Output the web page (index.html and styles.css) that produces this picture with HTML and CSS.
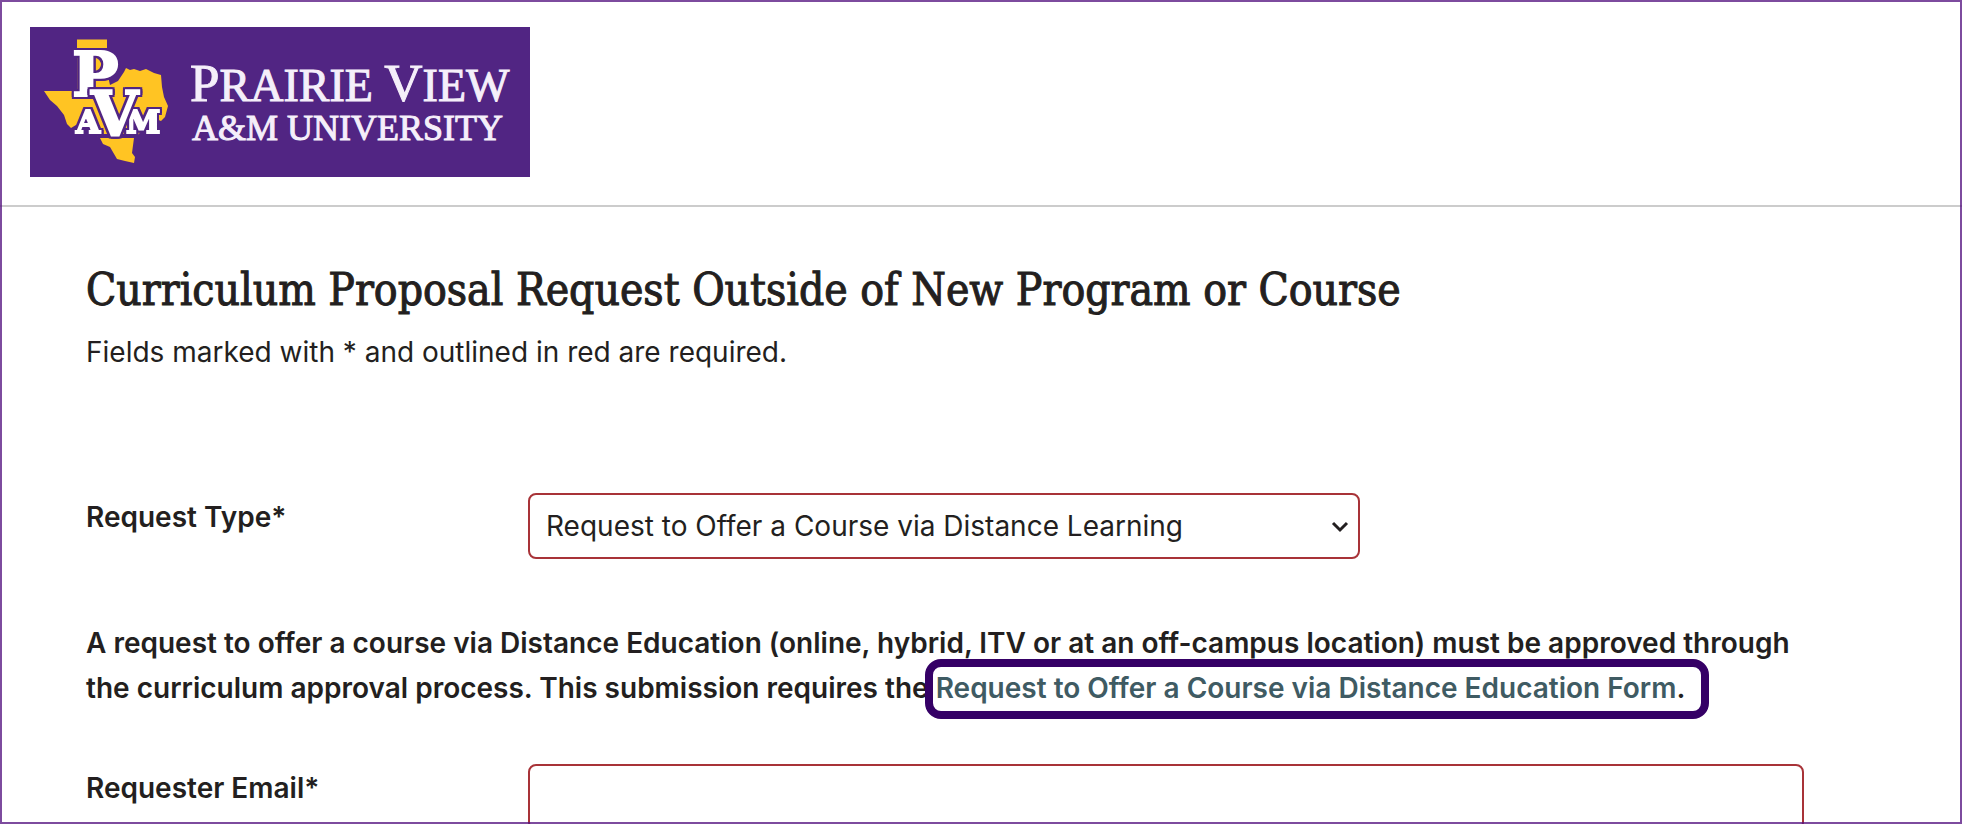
FILE: index.html
```
<!DOCTYPE html>
<html lang="en">
<head>
    <meta charset="UTF-8">
    <meta name="viewport" content="width=device-width, initial-scale=1.0">
    <title>Curriculum Proposal Request</title>
    <link rel="stylesheet" href="styles.css">
</head>
<body>
    <header class="site-header">
        <svg class="logo" viewBox="0 0 500 150" role="img" aria-label="Prairie View A&amp;M University">
            <rect class="logo-bg" width="500" height="150"/>
            <!-- Texas -->
            <path class="logo-state" d="M47 12.500H77V45L80 58L88 54L94 45L96 41L100 43L104 42L110 44L116 42L124 46L131 48L132 60L134 70L138 79L135 90L131 94L126 92L104 111L102 126L105 130L104 136L95 134L87 132L80 120L73 117L70 111L52 96L46 98L41 101L37 97L34 88L27 79L20 73L14 64H47Z"/>
            <rect class="logo-bg" x="45" y="21" width="34" height="5"/>
            <rect class="logo-bg" x="68" y="107" width="40" height="4"/>
            <g class="logo-mark">
                <text x="42" y="69" font-size="62">P</text>
                <text x="46" y="106" font-size="31">A</text>
                <text x="96" y="106" font-size="31">M</text>
                <text x="61" y="108" font-size="61">V</text>
            </g>
            <g class="logo-name">
                <text x="160" y="74" font-size="46"><tspan font-size="53">P</tspan>RAIRIE <tspan font-size="53">V</tspan>IEW</text>
                <text x="162" y="113" font-size="36">A&amp;M UNIVERSITY</text>
            </g>
        </svg>
    </header>

    <main class="content">
        <h1>Curriculum Proposal Request Outside of New Program or Course</h1>
        <p class="hint">Fields marked with * and outlined in red are required.</p>

        <form id="proposal-form">
            <div class="form-row">
                <label for="request-type" class="form-label">Request Type*</label>
                <div class="select-wrap">
                    <select id="request-type" name="request-type" class="input-field" required>
                        <option>Request to Offer a Course via Distance Learning</option>
                    </select>
                    <svg class="chevron" viewBox="0 0 16 10" aria-hidden="true">
                        <path d="M1 1L8 8L15 1"/>
                    </svg>
                </div>
            </div>

            <p class="notice">A request to offer a course via Distance Education (online, hybrid, ITV or at an off-campus location) must be approved through the curriculum approval process. This submission requires the <span class="highlight"><a href="#">Request to Offer a Course via Distance Education Form</a>.</span></p>

            <div class="form-row">
                <label for="requester-email" class="form-label">Requester Email*</label>
                <input type="email" id="requester-email" name="requester-email" class="input-field" required>
            </div>
        </form>
    </main>
</body>
</html>
```
FILE: styles.css
```
* {
    box-sizing: border-box;
}
body {
    margin: 0;
    height: 100vh;
    overflow: hidden;
    background-color: #fff;
    color: #231f20;
    font-family: Inter, "Liberation Sans", sans-serif;
    font-size: 28px;
    line-height: 45px;
}
/* Frame around the whole window */
body::after {
    content: "";
    position: fixed;
    inset: 0;
    border: 2px solid rgba(82, 15, 125, 0.75);
    pointer-events: none;
}
.site-header {
    padding: 27px 30px 28px;
    border-bottom: 2px solid #ccc;
}
.logo {
    display: block;
    width: 500px;
    height: 150px;
}
.logo-bg {
    fill: #512583;
}
.logo-state {
    fill: #ffc423;
}
.logo-mark text {
    fill: #fff;
    stroke: #fff;
    stroke-width: 2px;
    font-family: "DejaVu Serif", serif;
    font-weight: bold;
    /* purple outline round each letter */
    filter: drop-shadow(2px 0 0 #512583) drop-shadow(-2px 0 0 #512583) drop-shadow(0 2px 0 #512583) drop-shadow(0 -2px 0 #512583);
}
.logo-name {
    fill: #f5effa;
    stroke: #f5effa;
    stroke-width: 1px;
    font-family: "Liberation Serif", serif;
}
.content {
    padding: 51px 86px 0;
}
h1 {
    margin: 0;
    font-family: "Roboto Slab", "DejaVu Serif Condensed", "DejaVu Serif", serif;
    font-size: 44px;
    font-weight: 400;
    line-height: 64px;
    -webkit-text-stroke: 1px #231f20;
}
.hint {
    margin: 8px 0 118px;
}
.form-row {
    display: grid;
    grid-template-columns: 442px minmax(0, 1276px);
    align-items: start;
}
.form-label {
    font-weight: 600;
    padding-top: 2px;
}
.input-field {
    width: 100%;
    height: 66px;
    padding: 0 16px;
    border: 2px solid #a83338;
    border-radius: 8px;
    background-color: #fff;
    color: inherit;
    font: inherit;
}
.select-wrap {
    position: relative;
    max-width: 832px;
}
select.input-field {
    appearance: none;
}
.chevron {
    position: absolute;
    right: 12px;
    top: 29px;
    width: 16px;
    height: 10px;
    fill: none;
    stroke: #231f20;
    stroke-width: 3px;
    overflow: visible;
    pointer-events: none;
}
.notice {
    max-width: 1718px;
    margin: 62px 0 53px;
    font-weight: 600;
}
.notice a {
    color: #3f5b63;
    text-decoration: none;
}
.highlight {
    position: relative;
}
.highlight::after {
    content: "";
    position: absolute;
    inset: -12px -24px -14px -11px;
    border: 8px solid #350066;
    border-radius: 16px;
    pointer-events: none;
}
```
